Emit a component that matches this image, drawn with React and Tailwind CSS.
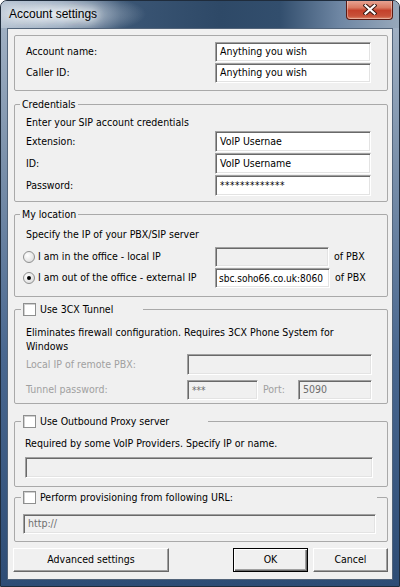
const sunken =
  'flex items-center border border-t-[#a0a0a0] border-l-[#a0a0a0] border-b-white border-r-white shadow-[inset_1px_1px_0_#696969,inset_-1px_-1px_0_#e3e3e3] px-[4px] whitespace-nowrap overflow-hidden';

const Field = ({ value, disabled, className = '' }) => (
  <div className={`${sunken} ${disabled ? 'bg-[#f0f0f0] text-[#6d6d6d]' : 'bg-white text-black'} ${className}`}>
    {value}
  </div>
);

const Checkbox = () => (
  <span className="inline-block w-[13px] h-[13px] shrink-0 border border-[#8e8f8f] bg-white shadow-[inset_1px_1px_0_#d0d0d0]" />
);

const Radio = ({ checked }) => (
  <span className="relative inline-flex w-[12px] h-[12px] shrink-0 items-center justify-center rounded-full border border-[#8e8f8f] bg-[radial-gradient(circle_at_35%_35%,#ffffff,#e6e6e6_60%,#d2d2d2)]">
    {checked && <span className="w-[4px] h-[4px] rounded-full bg-black" />}
  </span>
);

const Button = ({ children, primary, className = '' }) => (
  <div
    className={`flex items-center justify-center h-[24px] bg-[#f0f0f0] border ${
      primary
        ? 'border-black shadow-[inset_1px_1px_0_#fff,inset_-1px_-1px_0_#696969,inset_-2px_-2px_0_#a0a0a0]'
        : 'border-t-white border-l-white border-b-[#696969] border-r-[#696969] shadow-[inset_-1px_-1px_0_#a0a0a0]'
    } ${className}`}
  >
    {children}
  </div>
);

const legend = 'px-[2px] leading-[13px] h-[13px]';
const group = 'border border-[#a9a9a9] rounded-[2px] min-w-0';

export default function App() {
  return (
    <div className="w-[400px] h-[587px] flex flex-col border border-[#1f2c3c] rounded-t-[7px] overflow-hidden bg-[linear-gradient(to_bottom,#a7b6c8_0%,#7f94ad_25%,#4a6890_60%,#2d4c75_100%)] font-['DejaVu_Sans_Condensed','Liberation_Sans',sans-serif] text-[10.5px] text-black">
      {/* Title bar */}
      <div className="h-[27px] shrink-0 flex items-start justify-between bg-[radial-gradient(ellipse_90px_22px_at_55px_13px,rgba(236,242,248,0.85),rgba(236,242,248,0)),linear-gradient(to_right,#aebccc_0%,#7d92ab_14%,#3b5675_30%,#2e4967_55%,#324e6d_70%,#6e86a3_85%,#97a8bb_100%)]">
        <div className="pl-[8px] pt-[5px] text-[12px] leading-[16px] font-['Liberation_Sans',sans-serif] [text-shadow:0_0_8px_#fff,0_0_12px_#fff,0_0_16px_#e8eef5]">
          Account settings
        </div>
        <div className="-mt-[1px] mr-[6px] w-[47px] h-[20px] flex items-center justify-center rounded-b-[4px] border border-[#5b1a12] border-t-0 bg-[linear-gradient(to_bottom,#e9a898_0%,#d97a62_40%,#c4412b_55%,#c8523a_85%,#e08a6c_100%)] shadow-[inset_0_0_0_1px_rgba(255,255,255,0.35)]">
          <svg width="14" height="11" viewBox="0 0 14 11">
            <path d="M2.5 1.5 L11.5 9.5 M11.5 1.5 L2.5 9.5" stroke="#3a1a14" strokeWidth="4.2" strokeLinecap="square" fill="none" />
            <path d="M2.5 1.5 L11.5 9.5 M11.5 1.5 L2.5 9.5" stroke="#ffffff" strokeWidth="2.2" strokeLinecap="square" fill="none" />
          </svg>
        </div>
      </div>

      {/* Client area */}
      <div className="flex-1 mx-[6px] mb-[6px] border border-[#52647a] bg-[#f0f0f0] pt-[6px] pl-[6px] pr-[4px] pb-[7px] flex flex-col">
        {/* Account */}
        <div className={`${group} pt-[6px] pb-[7px] pl-[11px] pr-[16px] flex flex-col gap-[1px]`}>
          <div className="flex items-center justify-between">
            <span>Account name:</span>
            <Field value="Anything you wish" className="w-[156px] h-[20px]" />
          </div>
          <div className="flex items-center justify-between">
            <span>Caller ID:</span>
            <Field value="Anything you wish" className="w-[156px] h-[20px]" />
          </div>
        </div>

        {/* Credentials */}
        <fieldset className={`${group} mt-[7px] pl-[11px] pr-[16px] pb-[5px]`}>
          <legend className={`${legend} -ml-[6px]`}>Credentials</legend>
          <div className="pt-[4px] leading-[14px]">Enter your SIP account credentials</div>
          <div className="mt-[2px] flex flex-col gap-[1px]">
            <div className="flex items-center justify-between">
              <span>Extension:</span>
              <Field value="VoIP Usernae" className="w-[156px] h-[21px]" />
            </div>
            <div className="flex items-center justify-between">
              <span>ID:</span>
              <Field value="VoIP Username" className="w-[156px] h-[21px]" />
            </div>
            <div className="flex items-center justify-between">
              <span>Password:</span>
              <Field value="*************" className="w-[156px] h-[21px] text-[10px] tracking-[0.5px]" />
            </div>
          </div>
        </fieldset>

        {/* My location */}
        <fieldset className={`${group} mt-[6px] pl-[11px] pr-[16px] pb-[8px]`}>
          <legend className={`${legend} -ml-[6px]`}>My location</legend>
          <div className="pt-[6px] leading-[14px]">Specify the IP of your PBX/SIP server</div>
          <div className="mt-[6px] flex flex-col gap-[1px]">
            <div className="flex items-center">
              <div className="w-[192px] -ml-[3px] flex items-center gap-[3px]">
                <Radio />
                <span>I am in the office - local IP</span>
              </div>
              <Field value="" disabled className="w-[114px] h-[20px]" />
              <span className="ml-[5px]">of PBX</span>
            </div>
            <div className="flex items-center">
              <div className="w-[192px] -ml-[3px] flex items-center gap-[3px]">
                <Radio checked />
                <span>I am out of the office - external IP</span>
              </div>
              <Field value="sbc.soho66.co.uk:8060" className="w-[115px] h-[20px] !px-[3px] text-[10px]" />
              <span className="ml-[5px]">of PBX</span>
            </div>
          </div>
        </fieldset>

        {/* 3CX Tunnel */}
        <fieldset className={`${group} mt-[6px] pl-[11px] pr-[15px] pb-[3px]`}>
          <legend className={`${legend} -ml-[5px] w-[122px] flex items-center gap-[4px]`}>
            <Checkbox />
            <span>Use 3CX Tunnel</span>
          </legend>
          <div className="pt-[9px] leading-[14px] pr-[20px]">
            Eliminates firewall configuration. Requires 3CX Phone System for Windows
          </div>
          <div className="mt-[1px] flex items-center justify-between text-[#a0a0a0]">
            <span>Local IP of remote PBX:</span>
            <Field value="" disabled className="w-[185px] h-[21px]" />
          </div>
          <div className="mt-[5px] flex items-center text-[#a0a0a0]">
            <span className="w-[161px]">Tunnel password:</span>
            <Field value="***" disabled className="w-[71px] h-[20px] text-[10px]" />
            <span className="ml-[5px] w-[35px]">Port:</span>
            <Field value="5090" disabled className="w-[74px] h-[20px]" />
          </div>
        </fieldset>

        {/* Outbound proxy */}
        <fieldset className={`${group} mt-[11px] pl-[10px] pr-[14px] pb-[8px]`}>
          <legend className={`${legend} -ml-[4px] w-[187px] flex items-center gap-[4px]`}>
            <Checkbox />
            <span>Use Outbound Proxy server</span>
          </legend>
          <div className="pt-[8px] leading-[14px]">Required by some VoIP Providers. Specify IP or name.</div>
          <Field value="" disabled className="mt-[7px] h-[21px]" />
        </fieldset>

        {/* Provisioning */}
        <fieldset className={`${group} mt-[4px] pl-[8px] pr-[11px] pb-[7px]`}>
          <legend className={`${legend} -ml-[2px] w-[356px] flex items-center gap-[4px]`}>
            <Checkbox />
            <span>Perform provisioning from following URL:</span>
          </legend>
          <Field value="http://" disabled className="mt-[10px] h-[20px]" />
        </fieldset>

        {/* Buttons */}
        <div className="mt-[6px] -ml-[1px] flex items-center">
          <Button className="w-[156px]">Advanced settings</Button>
          <Button primary className="ml-auto w-[75px]">OK</Button>
          <Button className="ml-[5px] w-[75px]">Cancel</Button>
        </div>
      </div>
    </div>
  );
}
